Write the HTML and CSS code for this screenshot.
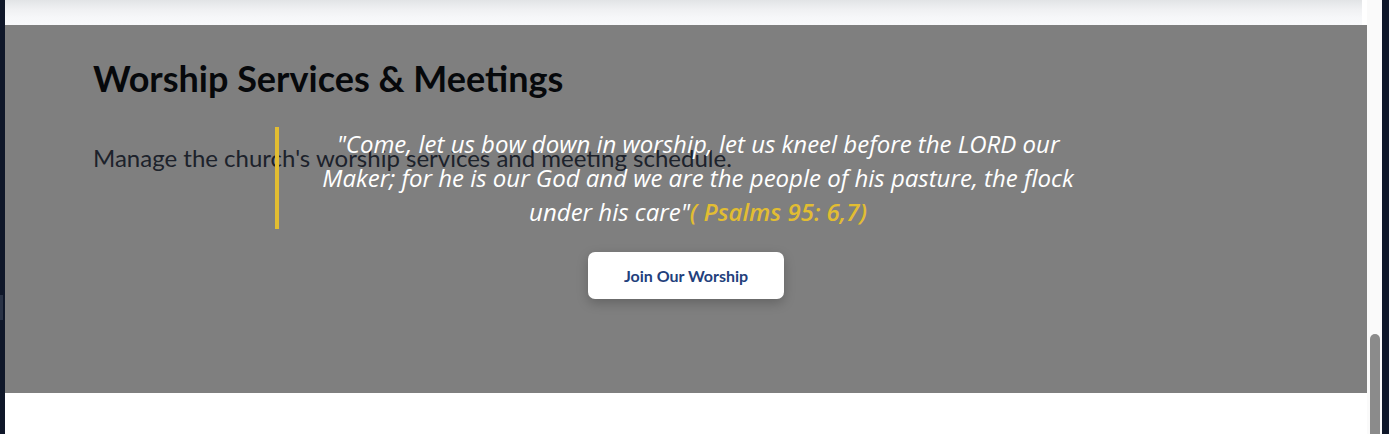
FILE: index.html
```html
<!DOCTYPE html>
<html lang="en">
<head>
<meta charset="utf-8">
<title>Worship Services &amp; Meetings</title>
<link rel="stylesheet" href="styles.css">
</head>
<body>
  <div class="edge edge-left"><span class="edge-mark"></span></div>
  <main class="main">
    <div class="topbar"></div>
    <section class="section">
      <h1 class="title">Worship Services &amp; Meetings</h1>
      <p class="subtitle">Manage the church's worship services and meeting schedule.</p>
      <div class="overlay">
        <blockquote class="quote">"Come, let us bow down in worship, let us kneel before the LORD our Maker; for he is our God and we are the people of his pasture, the flock under his care"<span class="ref">( Psalms 95: 6,7)</span></blockquote>
        <button class="join-btn" type="button">Join Our Worship</button>
      </div>
    </section>
    <div class="below"></div>
  </main>
  <div class="scrollbar"><div class="thumb"></div></div>
  <div class="edge edge-right"></div>
</body>
</html>
```

FILE: styles.css
```css
* { box-sizing: border-box; }

html, body {
  margin: 0;
  padding: 0;
  height: 434px;
  overflow: hidden;
}

body {
  display: flex;
  font-family: Lato, "Liberation Sans", sans-serif;
  background: #ffffff;
}

.edge {
  background: #0f1729;
  flex: 0 0 auto;
}

.edge-left {
  width: 5px;
  display: flex;
  flex-direction: column;
  padding-top: 295px;
}

.edge-mark {
  display: block;
  width: 3px;
  height: 25px;
  background: #2a3346;
}

.edge-right {
  width: 7px;
}

.main {
  flex: 1 1 auto;
  display: flex;
  flex-direction: column;
  background: #ffffff;
}

.topbar {
  height: 25px;
  flex: 0 0 auto;
  background: linear-gradient(#e2e4e6 0%, #eff0f2 35%, #f6f7f9 70%, #f8f9fb 100%);
  margin-right: 5px;
}

.section {
  position: relative;
  height: 368px;
  flex: 0 0 auto;
  background: #ffffff;
  padding: 32px 0 0 88px;
}

.title {
  margin: 0;
  font-size: 36px;
  line-height: 43px;
  font-weight: 700;
  color: #0d1117;
}

.subtitle {
  margin: 43px 0 0;
  font-size: 24px;
  line-height: 30px;
  color: #3a4456;
}

.overlay {
  position: absolute;
  inset: 0;
  background: rgba(0, 0, 0, 0.5);
  display: flex;
  flex-direction: column;
  align-items: center;
  padding-top: 102px;
}

.quote {
  margin: 0;
  width: 822px;
  border-left: 4px solid #e2bd32;
  padding: 0 4px 0 24px;
  font-family: "Open Sans", "Noto Sans", sans-serif;
  font-size: 24px;
  line-height: 34px;
  font-style: italic;
  color: #ffffff;
  text-align: center;
}

.ref {
  color: #e2bd32;
  font-weight: 600;
}

.join-btn {
  margin-top: 23px;
  width: 196px;
  height: 47px;
  border: none;
  border-radius: 7px;
  background: #ffffff;
  box-shadow: 0 4px 12px rgba(0, 0, 0, 0.22);
  font-family: Lato, "Liberation Sans", sans-serif;
  font-size: 16px;
  font-weight: 700;
  color: #233f7c;
  cursor: pointer;
}

.below {
  flex: 1 1 auto;
  background: #ffffff;
}

.scrollbar {
  width: 15px;
  flex: 0 0 auto;
  background: #fafafa;
  display: flex;
  flex-direction: column;
  justify-content: flex-end;
  padding-left: 3px;
}

.thumb {
  width: 10px;
  height: 100px;
  background: #8b8b8b;
  border-radius: 5px 5px 0 0;
}
```
